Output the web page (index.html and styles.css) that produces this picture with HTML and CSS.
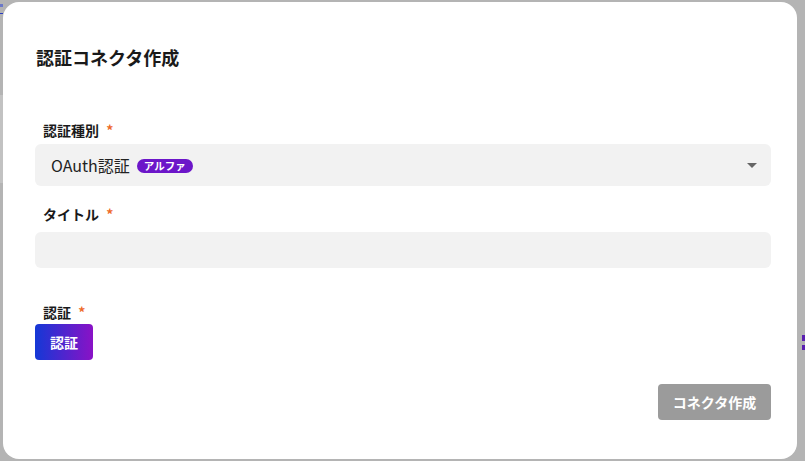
FILE: index.html
```html
<!DOCTYPE html>
<html lang="ja">
<head>
    <meta charset="UTF-8">
    <meta name="viewport" content="width=device-width, initial-scale=1.0">
    <title>認証コネクタ作成</title>
    <link rel="stylesheet" href="styles.css">
</head>
<body>
    <div class="backdrop">
        <!-- page behind the modal, mostly hidden -->
        <span class="behind-link"></span>
        <span class="behind-band"></span>
        <span class="behind-mark"></span>

        <div class="dialog">
            <h1 class="dialog-title">認証コネクタ作成</h1>

            <div class="field">
                <label class="field-label">認証種別 <span class="req">*</span></label>
                <div class="select">
                    <span class="select-value">OAuth認証</span>
                    <span class="badge">アルファ</span>
                    <span class="caret"></span>
                </div>
            </div>

            <div class="field field-title">
                <label class="field-label">タイトル <span class="req">*</span></label>
                <input class="text-input" type="text">
            </div>

            <div class="field field-auth">
                <label class="field-label">認証 <span class="req">*</span></label>
                <div><button class="btn-auth" type="button">認証</button></div>
            </div>

            <div class="actions">
                <button class="btn-create" type="button" disabled>コネクタ作成</button>
            </div>
        </div>
    </div>
</body>
</html>
```

FILE: styles.css
```css
* {
    box-sizing: border-box;
}
body {
    margin: 0;
    font-family: "Noto Sans CJK JP", "Noto Sans", sans-serif;
    background-color: #b4b4b4;
}
.backdrop {
    position: relative;
    height: 461px;
    padding: 2px 8px 2px 3px;
}
.behind-link {
    position: absolute;
    left: 0;
    top: 4px;
    width: 3px;
    height: 10px;
    border-bottom: 1px solid #2a3cc0;
    border-top: 3px solid #6b78c8;
}
.behind-band {
    position: absolute;
    left: 0;
    top: 95px;
    width: 3px;
    height: 88px;
    background-color: #c2c2c2;
}
.behind-mark {
    position: absolute;
    right: 0;
    top: 335px;
    width: 3px;
    height: 15px;
    border-top: 6px solid #5a1fb0;
    border-bottom: 5px solid #5a1fb0;
}
.dialog {
    position: relative;
    height: 457px;
    background-color: #fff;
    border-radius: 16px;
    padding: 42px 26px 0 32px;
    display: flex;
    flex-direction: column;
}
.dialog-title {
    margin: 0 0 0 1px;
    font-size: 18px;
    line-height: 26px;
    font-weight: 700;
    color: #1a1a1a;
}
.field {
    display: flex;
    flex-direction: column;
}
.field-label {
    margin-left: 8px;
    font-size: 14px;
    line-height: 18px;
    font-weight: 700;
    color: #1a1a1a;
}
.req {
    color: #ee6b2a;
    margin-left: 4px;
}
.field:first-of-type {
    margin-top: 51px;
}
.field:first-of-type .field-label {
    margin-bottom: 5px;
}
.select {
    position: relative;
    height: 42px;
    background-color: #f2f2f2;
    border-radius: 6px;
    padding: 0 16px;
    display: flex;
    align-items: center;
    gap: 7px;
}
.select-value {
    font-size: 16px;
    color: #222;
}
.badge {
    background-color: #6c16c9;
    color: #fff;
    font-size: 10.5px;
    font-weight: 700;
    line-height: 14px;
    padding: 0 7px;
    border-radius: 7px;
    margin-top: 1px;
}
.caret {
    position: absolute;
    right: 14px;
    top: 19px;
    width: 0;
    height: 0;
    border-left: 5px solid transparent;
    border-right: 5px solid transparent;
    border-top: 5px solid #666;
}
.field-title {
    margin-top: 19px;
}
.field-title .field-label {
    margin-bottom: 9px;
}
.text-input {
    height: 36px;
    border: none;
    border-radius: 6px;
    background-color: #f2f2f2;
    padding: 0 16px;
    font-size: 14px;
}
.field-auth {
    margin-top: 35px;
}
.field-auth .field-label {
    margin-bottom: 3px;
}
.btn-auth {
    height: 36px;
    width: 58px;
    border: none;
    border-radius: 4px;
    background: linear-gradient(90deg, #1438d6, #8a12c6);
    color: #fff;
    font-family: inherit;
    font-size: 14px;
    font-weight: 700;
    cursor: pointer;
}
.actions {
    display: flex;
    justify-content: flex-end;
    margin-top: 24px;
}
.btn-create {
    height: 36px;
    width: 113px;
    border: none;
    border-radius: 4px;
    background-color: #9b9b9b;
    color: #fff;
    font-family: inherit;
    font-size: 14px;
    font-weight: 700;
}
```
